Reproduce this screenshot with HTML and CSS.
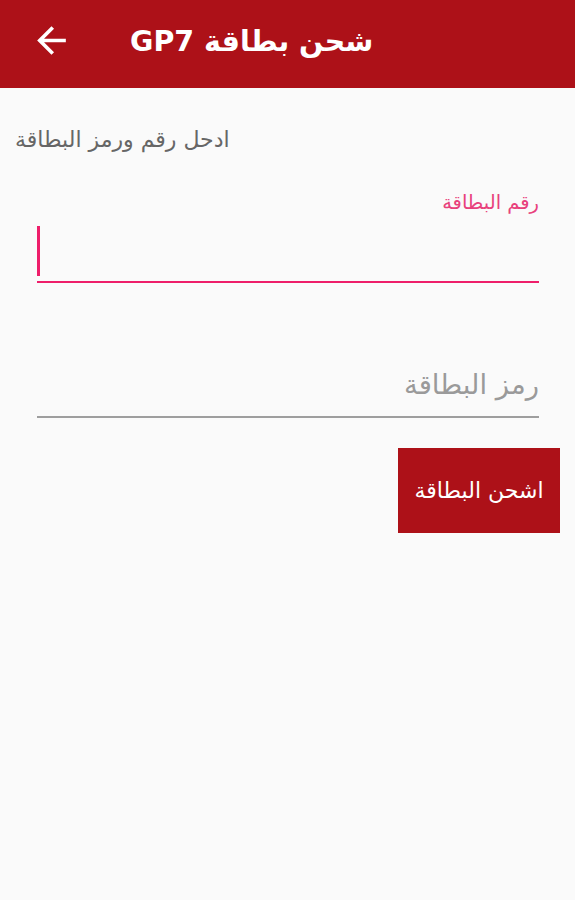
FILE: index.html
```html
<!DOCTYPE html>
<html lang="ar">
<head>
<meta charset="utf-8">
<link rel="stylesheet" href="styles.css">
</head>
<body>
<header class="toolbar">
  <svg class="back" viewBox="0 0 24 24" width="43" height="43"><path fill="#fff" d="M20 11H7.83l5.59-5.59L12 4l-8 8 8 8 1.41-1.41L7.83 13H20v-2z"/></svg>
  <h1 class="title" dir="rtl">شحن بطاقة GP7</h1>
</header>
<main class="content">
  <p class="hint" dir="rtl">ادحل رقم ورمز البطاقة</p>
  <div class="field active">
    <label class="float-label" dir="rtl">رقم البطاقة</label>
    <div class="input-box"><span class="cursor"></span></div>
  </div>
  <div class="field">
    <div class="input-box placeholder" dir="rtl">رمز البطاقة</div>
  </div>
  <div class="actions">
    <button class="btn" dir="rtl">اشحن البطاقة</button>
  </div>
</main>
</body>
</html>
```

FILE: styles.css
```css
html, body {
  margin: 0;
  padding: 0;
  background: #fafafa;
  font-family: "DejaVu Sans", "Noto Sans", sans-serif;
}
.toolbar {
  height: 88px;
  background: #ad1118;
  display: flex;
  align-items: center;
  padding-left: 30px;
  box-sizing: border-box;
}
.back {
  display: block;
  margin-top: -8px;
}
.title {
  margin: -6px 0 0 57px;
  color: #fff;
  font-size: 28.5px;
  font-weight: bold;
}
.content {
  padding: 36px 36px 0 15px;
}
.hint {
  margin: 0;
  text-align: left;
  color: #666;
  font-size: 22px;
  line-height: 32px;
}
.field {
  margin-left: 22px;
}
.float-label {
  display: block;
  margin-top: 33px;
  text-align: right;
  color: #e8417c;
  font-size: 19.5px;
  line-height: 28px;
}
.input-box {
  border-bottom: 2px solid #9e9e9e;
  box-sizing: content-box;
}
.active .input-box {
  border-bottom-color: #ee1e6a;
  display: flex;
  align-items: flex-end;
  height: 64px;
}
.cursor {
  display: block;
  width: 3px;
  height: 50px;
  background: #ee1e6a;
  margin-bottom: 5px;
}
.placeholder {
  margin-top: 75px;
  height: 58px;
  color: #9a9a9a;
  font-size: 27.5px;
  line-height: 52px;
  text-align: right;
}
.actions {
  display: flex;
  justify-content: flex-end;
  margin-right: -21px;
  margin-top: 30px;
}
.btn {
  width: 162px;
  height: 85px;
  background: #ad1118;
  color: #fff;
  border: none;
  font-family: inherit;
  font-size: 22px;
}
```
